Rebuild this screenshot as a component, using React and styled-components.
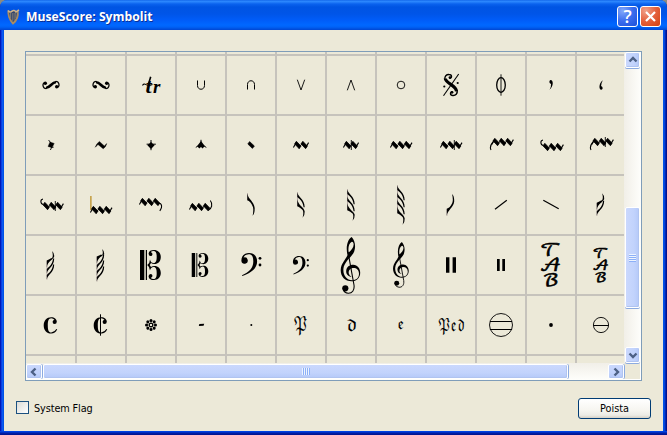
import React from "react";
import styled, { createGlobalStyle } from "styled-components";

const Global = createGlobalStyle`
  * { box-sizing: border-box; }
  html, body { margin: 0; overflow: hidden; background: #8c8b80; }
`;

const Window = styled.div`
  width: 667px;
  height: 435px;
  display: flex;
  flex-direction: column;
  background: linear-gradient(to right,
    #0019b8 0 1px, #0a3ee0 1px 2px, #0a5af0 2px 3px, #0052e6 3px 664px, #0046dc 664px 665px, #0028b4 665px 666px, #00138c 666px);
  border-radius: 7px 7px 0 0;
  overflow: hidden;
  color: #000;
  font: 11px "DejaVu Sans Condensed", "DejaVu Sans", sans-serif;
`;

const TitleBar = styled.div`
  height: 30px;
  flex: none;
  display: flex;
  align-items: center;
  padding: 3px 6px 0 6px;
  background: linear-gradient(
    #0a5be4 0, #2f8bff 1px, #2680fb 2px, #0a62ee 4px, #0054e3 7px,
    #0055e8 14px, #005cf8 20px, #0068ff 25px, #0062f6 27px, #0046d2 30px
  );
`;

const HarpIcon = styled.svg`
  width: 16px;
  height: 18px;
  flex: none;
`;

const Title = styled.div`
  flex: 1;
  margin-left: 4px;
  color: #fff;
  font: bold 12.2px "Open Sans", "Noto Sans", sans-serif;
  letter-spacing: 0.02px;
  text-shadow: 1px 1px 0 #0a2f96;
  white-space: nowrap;
`;

const CaptionButton = styled.div`
  width: 21px;
  height: 21px;
  margin-left: 2px;
  border: 1px solid #fff;
  border-radius: 3px;
  background: ${(p) =>
    p.$danger
      ? "radial-gradient(circle at 25% 20%, #f0a08a 0, #e4603c 50%, #d2400f 100%)"
      : "radial-gradient(circle at 25% 20%, #82a8fa 0, #3a6cee 50%, #1c50d8 100%)"};
  svg { display: block; width: 19px; height: 19px; }
`;

const HelpMark = styled.div`
  color: #fff;
  font: 600 18px/19px "Open Sans", sans-serif;
  text-align: center;
`;

const Body = styled.div`
  flex: 1;
  margin: 0 4px;
  padding: 21px 12px 0 12px;
  background: #ece9d8;
  display: flex;
  flex-direction: column;
`;

const Frame = styled.div`
  height: 4px;
  flex: none;
  background: linear-gradient(#0048e8 0, #003cdc 1px, #0020a8 2px, #00128c 4px);
`;

const ScrollArea = styled.div`
  width: 617px;
  height: 330px;
  flex: none;
  margin-left: 9px;
  border: 1px solid #7f9db9;
  display: grid;
  grid-template-columns: 598px 17px;
  grid-template-rows: 311px 17px;
`;

const Palette = styled.div`
  overflow: hidden;
  display: grid;
  grid-template-columns: repeat(12, 50px);
  grid-template-rows: 3px repeat(5, 60px) 8px;
`;

const Cell = styled.div`
  border: 1px solid #c6c3bc;
  border-left-width: ${(p) => (p.$first ? 0 : 1)}px;
  border-top-width: ${(p) => (p.$cut === "top" ? 0 : 1)}px;
  border-bottom-width: ${(p) => (p.$cut === "bottom" ? 0 : 1)}px;
`;

const Glyph = styled.svg`
  display: block;
  width: 50px;
  height: 60px;
  margin: -1px 0 0 ${(p) => (p.$first ? 0 : -1)}px;
  overflow: visible;
  .s { fill: none; stroke: #000; }
`;

const Track = styled.div`
  display: flex;
  flex-direction: ${(p) => (p.$vertical ? "column" : "row")};
  padding: ${(p) => (p.$vertical ? "0 1px" : "1px 0")};
  background: linear-gradient(${(p) => (p.$vertical ? "to right" : "to bottom")}, #f1efe8, #fefefb);
`;

const ScrollPart = styled.div`
  flex: none;
  width: ${(p) => p.$w}px;
  height: ${(p) => p.$h}px;
  display: flex;
  align-items: center;
  justify-content: center;
  border: 1px solid #fff;
  border-radius: 2px;
  background: linear-gradient(${(p) => (p.$across ? "to right" : "to bottom")}, #cad8fd, #c2d3fc 60%, #b5c9f8);
  box-shadow: inset -1px -1px 0 #b0c4f0, ${(p) => (p.$across ? "0 1px" : "1px 0")} 0 #8cabe0;
`;

const Spacer = styled.div`
  flex: ${(p) => (p.$size ? `0 0 ${p.$size}px` : "1")};
`;

const Corner = styled.div`
  border: solid #fff;
  border-width: 0 1px 1px 0;
`;

const Grip = styled.div`
  width: ${(p) => (p.$across ? 7 : 8)}px;
  height: ${(p) => (p.$across ? 8 : 7)}px;
  background: repeating-linear-gradient(
    ${(p) => (p.$across ? "to bottom" : "to right")}, #eef4fe 0 1px, #8cb0f8 1px 2px
  );
`;

const Footer = styled.div`
  display: flex;
  align-items: center;
  height: 21px;
  margin-top: 17px;
`;

const CheckBox = styled.div`
  width: 13px;
  height: 13px;
  margin-bottom: 2px;
  border: 1px solid #1c5180;
  background: linear-gradient(135deg, #dcdcd7, #fff);
`;

const Label = styled.div`
  flex: 1;
  margin-left: 5px;
  font-size: 10.8px;
  letter-spacing: -0.1px;
`;

const PushButton = styled.div`
  width: 73px;
  height: 21px;
  border: 1px solid #003c74;
  border-radius: 3px;
  background: linear-gradient(#fff, #f6f5f0 60%, #ecebe5 85%, #d6d0c5);
  text-align: center;
  font-size: 10.8px;
  line-height: 20px;
`;

const Script = styled.text`
  font-family: ${(p) => (p.$trill ? '"Liberation Serif"' : '"DejaVu Math TeX Gyre", "DejaVu Serif", "Liberation Serif"')}, serif;
  font-style: ${(p) => (p.$trill ? "italic" : "normal")};
  font-weight: ${(p) => (p.$trill ? "bold" : "normal")};
  text-anchor: middle;
`;

/* Line drawing with a given stroke width */
const L = ({ d, w = 1 }) => <path className="s" d={d} strokeWidth={w} />;

/* Run of slanted diamonds joined by thin strokes, as in pralls and mordents */
function Zig({ x, y = 30, n = 3, left = true, right = true }) {
  const xs = Array.from({ length: n }, (_, i) => x + i * 6.4);
  const end = xs[n - 1];
  return (
    <>
      {xs.map((c) => (
        <path key={c} stroke="#000" strokeWidth=".7" d={`M${c - 1.4} ${y - 3.7}L${c + 3.2} ${y + 1.1}L${c + 1.4} ${y + 3.7}L${c - 3.2} ${y - 1.1}Z`} />
      ))}
      {xs.slice(1).map((c) => (
        <L key={c} w={0.8} d={`M${c - 5.2} ${y + 3.4}L${c - 1.3} ${y - 3.2}`} />
      ))}
      {left && <L w={1.1} d={`M${x - 4.4} ${y + 2.4}L${x - 1.3} ${y - 3}`} />}
      {right && <L w={1.1} d={`M${end + 1.2} ${y + 3}L${end + 4.4} ${y - 2.4}`} />}
    </>
  );
}

/* Stack of n note flags; `up` flips it so that the stem is at the foot */
function Flags({ n, top, bottom, up }) {
  const gap = up ? 6 : 7;
  const tail = bottom - top - (n - 1) * gap;
  return (
    <g transform={up ? "translate(-.5 60) scale(1 -1)" : undefined}>
      <path d={`M21.5 ${top}V${top + (n - 1) * gap + 7}`} stroke="#a99" strokeWidth=".8" />
      {Array.from({ length: n }, (_, i) => {
        const y = top + i * gap;
        return i === n - 1 ? (
          <path key={i} d={`M21.3 ${y}C22 ${y + 6} 28 ${y + 8} 28.7 ${y + tail * 0.66}Q28.8 ${y + tail - 2} 26.6 ${y + tail}Q28 ${y + tail * 0.7} 26.6 ${y + tail * 0.58}C25.3 ${y + 9.5} 23.4 ${y + 7.8} 21.3 ${y + 7}Z`} />
        ) : (
          <path key={i} d={`M21.3 ${y}C22 ${y + 5} 28.5 ${y + 6.5} 28.7 ${y + 15}L27.6 ${y + 15}C26.8 ${y + 9} 24 ${y + 7} 21.3 ${y + 4.6}Z`} />
        );
      })}
    </g>
  );
}

const AltoClef = () => (
  <>
    <path d="M14 15h4.3v30H14zM19.8 15h1.2v30h-1.2z" />
    <path d="M21.2 30Q24 28 24 24.5Q24.7 28 27.6 28C30 28 30.7 25.5 30.7 22C30.7 18 30 16 27.4 16Q25.4 16 24.8 17.2C27 17.5 27 21 24.6 21Q22.5 20.8 22.6 18.6C22.8 16 25 15 28 15C32 15 34.8 17.8 34.8 22C34.8 26.5 32 29 28.5 29Q26.2 29 25 28L23.7 30L25 32Q26.2 31 28.5 31C32 31 34.8 33.5 34.8 38C34.8 42.2 32 45 28 45C25 45 22.8 44 22.6 41.4Q22.5 39.2 24.6 39C27 39 27 42.5 24.8 42.8Q25.4 44 27.4 44C30 44 30.7 42 30.7 38C30.7 34.5 30 32 27.6 32Q24.7 32 24 35.5Q24 32 21.2 30Z" />
  </>
);

const BassClef = () => (
  <>
    <path d="M16 40.3C23 37.3 27.3 33 27.3 26.5C27.3 21.5 26 19.2 22.7 19.2Q19 19.2 17.6 22.5A3.2 3.2 0 1 1 15.4 26C15.2 21 18.5 18 23 18C28.3 18 31.1 21.5 31.1 26.5C31.1 33.5 24.5 38.5 16.2 41Z" />
    <circle cx="34" cy="23.3" r="1.4" />
    <circle cx="34" cy="30" r="1.4" />
  </>
);

const TrebleClef = () => (
  <>
    <path fillRule="evenodd" d="M21.5 20C19.5 12 21.5 4.5 25.7 2C29 6 30 11 28.2 16.5C26.6 21.5 18.2 26 17.4 34C17 40.5 21 45.5 26.6 45.2C31 45 33 42 33 38.7C33 35 30.6 33 27.5 33C24 33 22.2 36 22.8 38.5Q23.3 40.8 25.6 41.7C22 41.5 20 38.8 20.2 36C20.4 32 23.5 29.8 27.2 29.8C31.5 30 34.2 33.5 34.2 37.7C34.2 43 30.5 46.3 25.6 46.3C19 46.3 14.6 41.5 14.7 35C15 28 19.8 24.7 21.5 20ZM22.7 17.4C25.5 15 28 12 27.6 8.7Q27.2 6.5 25.8 6.7C22.5 8.7 22 13 22.7 17.4Z" />
    <L w={1.1} d="M22 17L28 50C28.7 55.5 26 58.4 22.2 58.2Q18.5 58 17.5 55" />
    <circle cx="19.3" cy="53.3" r="3.1" />
  </>
);

const CommonTime = () => (
  <path d="M31.2 34.2Q29.3 38.5 25.2 38.5C20.5 38.5 17.7 35 17.7 30.4C17.7 25.6 20.7 22.2 25.2 22.2C28.4 22.2 30.8 24 30.8 26.7Q30.7 29 28.6 29.1Q26.5 29 26.6 26.8Q26.8 25 28.4 24.7Q27.3 23.2 25.3 23.2C22.5 23.2 21.8 26 21.8 30.4C21.8 35 22.6 37.4 25.3 37.4Q28.4 37.3 30.4 34Z" />
);

const Turn = () => (
  <>
    <L w={1.2} d="M18.6 32.6C15.8 31 16.8 26.3 20.3 26.3M31.4 27.4C34.2 29 33.2 33.7 29.7 33.7" />
    <L w={2.5} d="M20 27.2C24 26.8 26 33.2 30 32.8" />
    <circle cx="19.3" cy="31.8" r="1.7" />
    <circle cx="30.7" cy="28.2" r="1.7" />
  </>
);

const Tab = ({ size, base, step }) => (
  <>
    {["𝒯", "𝒜", "ℬ"].map((ch, i) => (
      <Script key={ch} x="0" y="0" transform={`translate(24.5 ${base + i * step}) scale(1.2 1)`} fontSize={size} stroke="#000" strokeWidth=".6">{ch}</Script>
    ))}
  </>
);

const Hook = ({ y }) => <L w={1.1} d={`M17 ${y - 7}C14 ${y - 6.5} 14.2 ${y - 2} 17.5 ${y - 1.5}`} />;
const Drop = () => <L w={1.1} d="M15 35C13.6 32 15.5 28 19 25" />;

const symbols = [
  /* ornaments and articulations */
  <g transform="translate(50 0) scale(-1 1)"><Turn /></g>,
  <Turn />,
  <>
    <Script $trill x="22.6" y="37.5" fontSize="22">t</Script>
    <Script $trill x="30.6" y="37.5" fontSize="19">r</Script>
    <L w={1.6} d="M24.7 21.8L22.8 28" />
    <L w={1.1} d="M16.5 30.5Q17.8 28.2 20 29.6T26.5 29.4" />
  </>,
  <L d="M21.5 25.5V30.5C21.5 35.5 28.5 35.5 28.5 30.5V25.5" />,
  <L d="M21.5 34.5V29.5C21.5 24.5 28.5 24.5 28.5 29.5V34.5" />,
  <L d="M21.3 24.7L25 35L28.7 24.7" w={0.9} />,
  <L d="M21.3 35.3L25 25L28.7 35.3" w={0.9} />,
  <circle className="s" cx="25" cy="30" r="3.8" strokeWidth=".9" />,
  <>
    <L w={1.1} d="M32.7 19L17.5 40.7" />
    <L w={3.2} d="M19.3 23.5C19.5 28.5 30.2 30 30.5 36.3" />
    <L w={1.4} d="M18.8 25C18.3 21 20.5 19.4 23 19.5C26.5 19.5 26 23.5 23.5 23.2M31.2 35C31.7 39 29.5 40.6 27 40.5C23.5 40.5 24 36.5 26.5 36.8" />
    <circle cx="24" cy="22.6" r="1.4" /><circle cx="26" cy="37.3" r="1.4" />
    <circle cx="18.3" cy="31.5" r="1.1" /><circle cx="31.7" cy="28" r="1.1" />
  </>,
  <>
    <ellipse className="s" cx="25" cy="30" rx="4.3" ry="7.3" strokeWidth="1.3" />
    <L d="M25 19.3V40.7" w={0.9} />
  </>,
  <path d="M23.4 26.2Q24 24.8 25.5 25.2C28 27 26.5 32.5 23.5 34.7Q25.4 31.5 25 29Q23 28.4 23.4 26.2Z" />,
  <path d="M26.6 33.8Q26 35 24.8 34.8C22.3 33 23.5 27.5 26.8 25.2Q25 28.5 25.1 31Q27 31.6 26.6 33.8Z" />,

  /* rests and pralls */
  <>
    <path stroke="#000" strokeWidth=".4" d="M24 27L28.2 28.4L26 32.8L22 31.4Z" />
    <L w={0.9} d="M22.6 25L24.8 28M25.6 32.3L27.6 32.2M25.8 32L24.4 35" />
  </>,
  <path stroke="#000" strokeWidth=".4" d="M19.2 32.3Q20.8 28 23.4 26.4L28.4 31Q29.6 29.6 30.8 28.6Q30 32 27.2 33.8L22 29.5Q20.5 31 19.2 32.3Z" />,
  <>
    <path d="M25 27L28.6 30.2L25 34L21.4 30.2Z" />
    <L w={1} d="M25 25V35.2M20.6 29.2H23M27 29.2H29.8" />
  </>,
  <>
    <path d="M25 26L28.8 31L26.6 33.4L25 32L23.2 33.4L21.2 31Z" />
    <L w={1} d="M25 24.8V30M19.8 32.4L22.5 30.6M30.3 32.4L27.5 30.6" />
  </>,
  <path stroke="#000" strokeWidth=".6" d="M23.6 26.6L28.4 31L26.4 33.4L21.8 29Z" />,
  <Zig x={21.8} n={2} />,
  <><Zig x={21.8} n={2} /><L d="M25.3 25V35" w={0.9} /></>,
  <Zig x={18.8} />,
  <><Zig x={18.8} /><L d="M28.3 25V35" w={0.9} /></>,
  <><Drop /><Zig x={20.2} y={27} /></>,
  <><Hook y={32} /><Zig x={20.2} y={32} left={false} /></>,
  <><Drop /><Zig x={20.2} y={27} /><L d="M29.3 22V32" w={0.9} /></>,

  /* pralls with lead-ins, flags */
  <><Hook y={31} /><Zig x={20.2} y={31} left={false} /><L d="M29.3 26V36" w={0.9} /></>,
  <><path d="M14.3 21h1.2v14h-1.2z" fill="#b88818" /><Zig x={18.8} y={35} /></>,
  <><Zig x={17.8} y={27} right={false} /><L w={1.1} d="M31.5 29.7C34.5 26 37.5 31 33.8 35.8" /></>,
  <><Zig x={17.8} y={32} right={false} /><L w={1.1} d="M32 35.5C36 33.5 37 29 34.3 25.5" /></>,
  <Flags n={1} top={18.3} bottom={40.7} />,
  <Flags n={2} top={17.3} bottom={42.7} />,
  <Flags n={3} top={14.3} bottom={45.7} />,
  <Flags n={4} top={10.3} bottom={49.7} />,
  <Flags n={1} top={19.2} bottom={41} up />,
  <L d="M19 34.3L30.8 25.3" w={1.2} />,
  <L d="M17.3 25.3L32.7 33.8" w={1.2} />,
  <Flags n={2} top={19.2} bottom={41.7} up />,

  /* flags and clefs */
  <Flags n={3} top={15.5} bottom={44} up />,
  <Flags n={4} top={13.5} bottom={46} up />,
  <AltoClef />,
  <g transform="translate(4.6 6.1) scale(.795)"><AltoClef /></g>,
  <BassClef />,
  <g transform="translate(4.6 6.6) scale(.8)"><BassClef /></g>,
  <TrebleClef />,
  <g transform="translate(5.2 5.4) scale(.805)"><TrebleClef /></g>,
  <path d="M20 22.3h3.4v15.4H20zM26.6 22.3H30v15.4h-3.4z" />,
  <path d="M21 24h2.7v12H21zM26.3 24H29v12h-2.7z" />,
  <Tab size={17} base={21.3} step={14.8} />,
  <Tab size={13} base={23} step={12} />,

  /* time signatures, pedal marks, note heads */
  <CommonTime />,
  <><CommonTime /><L d="M24.5 19.3V40.7" w={1} /></>,
  <>
    {[0, 45, 90, 135, 180, 225, 270, 315].map((a) => (
      <g key={a} transform={`rotate(${a} 25 30)`}>
        <circle cx="25" cy="25.5" r="1.5" />
        <L d="M25 26V28.5" w={0.8} />
      </g>
    ))}
    <circle className="s" cx="25" cy="30" r="1.7" />
  </>,
  <path d="M23.3 29L28.2 28.7L27.6 30.8L22.8 31Z" />,
  <circle cx="25.3" cy="30" r="1" />,
  <Script x="0" y="0" fontSize="18" transform="translate(24.5 35.6) scale(.76 1)">𝔓</Script>,
  <Script x="0" y="0" fontSize="17" transform="translate(25.3 36) scale(1.05 1)">𝔡</Script>,
  <Script x="25" y="34" fontSize="14">𝔢</Script>,
  <Script x="0" y="0" fontSize="17.5" transform="translate(25.2 35.8) scale(.7 1)">𝔓𝔢𝔡</Script>,
  <>
    <circle className="s" cx="25" cy="30" r="11.5" strokeWidth=".9" />
    <L d="M14 26.5H36M14 34.5H36" />
  </>,
  <circle cx="25" cy="30" r="1.9" />,
  <>
    <circle className="s" cx="25" cy="30" r="7.6" strokeWidth=".9" />
    <L d="M17.5 30.5H32.5" />
  </>,
];

const arrows = {
  up: "M1.5 6.5L5 3L8.5 6.5",
  down: "M1.5 3.5L5 7L8.5 3.5",
  left: "M6.5 1.5L3 5L6.5 8.5",
  right: "M3.5 1.5L7 5L3.5 8.5",
};

const Arrow = ({ dir }) => (
  <svg width="10" height="10">
    <path d={arrows[dir]} fill="none" stroke="#4d6185" strokeWidth="2.4" />
  </svg>
);

const columns = Array.from({ length: 12 }, (_, i) => i);

export default function App() {
  return (
    <Window>
      <Global />
      <TitleBar>
        <HarpIcon viewBox="0 0 16 18">
          <path d="M2.5 2.5C1.5 6 3.5 12 7 15.5C10 13 12.5 8 11.8 3" fill="#33446a" stroke="#a88b62" strokeWidth="1.8" />
          <path d="M2 2.5Q4 5 6 3.2T10 4L13 1.8" fill="none" stroke="#d0b48a" strokeWidth="1.6" />
          <path d="M4.5 5V10M6.3 5V13M8.1 5V12.5M9.8 5V10" stroke="#8d8577" strokeWidth=".8" />
        </HarpIcon>
        <Title>MuseScore: Symbolit</Title>
        <CaptionButton><HelpMark>?</HelpMark></CaptionButton>
        <CaptionButton $danger>
          <svg><path d="M5 5L14 14M14 5L5 14" stroke="#fff" strokeWidth="2.2" /></svg>
        </CaptionButton>
      </TitleBar>
      <Body>
        <ScrollArea>
          <Palette>
            {columns.map((c) => <Cell key={`t${c}`} $first={c === 0} $cut="top" />)}
            {symbols.map((symbol, i) => (
              <Cell key={i} $first={i % 12 === 0}>
                <Glyph $first={i % 12 === 0}>{symbol}</Glyph>
              </Cell>
            ))}
            {columns.map((c) => <Cell key={`b${c}`} $first={c === 0} $cut="bottom" />)}
          </Palette>
          <Track $vertical>
            <ScrollPart $w={15} $h={16} $across><Arrow dir="up" /></ScrollPart>
            <Spacer $size={139} />
            <ScrollPart $w={15} $h={101} $across><Grip $across /></ScrollPart>
            <Spacer />
            <ScrollPart $w={15} $h={16} $across><Arrow dir="down" /></ScrollPart>
          </Track>
          <Track>
            <ScrollPart $w={16} $h={15}><Arrow dir="left" /></ScrollPart>
            <Spacer $size={1} />
            <ScrollPart $w={525} $h={15}><Grip /></ScrollPart>
            <Spacer />
            <ScrollPart $w={16} $h={15}><Arrow dir="right" /></ScrollPart>
          </Track>
          <Corner />
        </ScrollArea>
        <Footer>
          <CheckBox />
          <Label>System Flag</Label>
          <PushButton>Poista</PushButton>
        </Footer>
      </Body>
      <Frame />
    </Window>
  );
}
